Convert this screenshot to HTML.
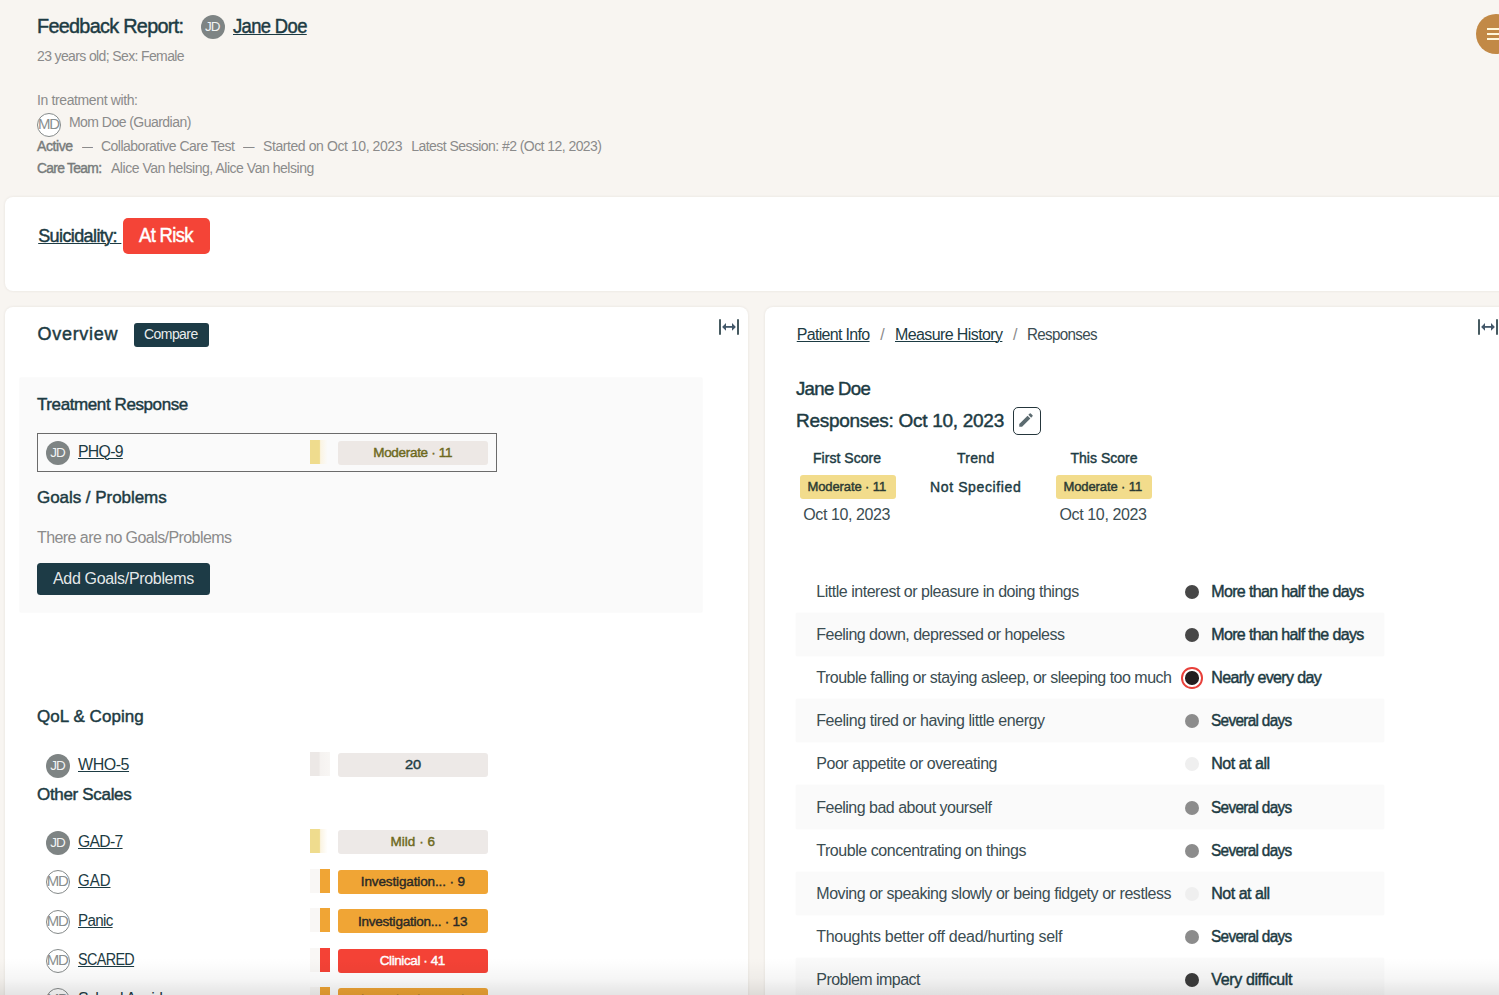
<!DOCTYPE html>
<html lang="en">
<head>
<meta charset="utf-8">
<title>Feedback Report: Jane Doe</title>
<style>
html,body{margin:0;padding:0}
body{width:1499px;height:995px;overflow:hidden;position:relative;background:#f8f5f1;font-family:"Liberation Sans",sans-serif}
h1,h2,h3{margin:0;font-weight:normal}
a{text-decoration:none}
.t{position:absolute;white-space:pre;transform-origin:0 50%;line-height:1;font-family:"Liberation Sans",sans-serif;font-weight:normal;z-index:3}
.t.m{-webkit-text-stroke:0.45px currentColor}
.t.m.s{-webkit-text-stroke:0.42px currentColor}
.t.b{font-weight:bold}
.t.u{text-decoration:underline;text-decoration-thickness:1.1px;text-underline-offset:1.2px}
.panel{position:absolute;background:#fff;border-radius:8px;box-shadow:0 0 3px rgba(40,30,20,.09)}
.menu{position:absolute;left:1476px;top:14px;width:40px;height:40px;border-radius:50%;background:#c28946}
.menu i{position:absolute;left:11px;width:18px;height:2.2px;background:#fff8dc}
.av{position:absolute;width:24px;height:24px;border-radius:50%;box-sizing:border-box;font-size:14px;line-height:24px;text-align:center;letter-spacing:-1px;text-indent:-1px;z-index:3}
.av.f{background:#7e8484;color:rgba(255,255,255,.92);font-size:13.5px}
.av.o{background:#fff;border:1px solid #858a8a;color:#8a8f8f;line-height:19.6px;font-size:15px;letter-spacing:-1.2px;text-indent:-1.2px}
.risk{position:absolute;left:123px;top:217.75px;width:86.5px;height:35.75px;border-radius:5px;background:#f44437}
.btn{position:absolute;background:#1d3b46}
.exp{position:absolute}
.card{position:absolute;background:#fafafa;border-radius:1px;box-shadow:0 0 2px rgba(0,0,0,.07)}
.rowbox{position:absolute;box-sizing:border-box;border:1px solid #6b6b6b;background:transparent}
.bar{position:absolute;width:19.6px;height:24px}
.bar.y1{background:linear-gradient(90deg,#efdc8e 0,#efdc8e 47%,#fbf4e2 53%,rgba(252,247,238,0) 88%)}
.bar.g{background:linear-gradient(90deg,#ece8e6 0,#ece8e6 46%,#f5f2f0 50%,#f8f6f4 100%)}
.bar.o2{background:linear-gradient(90deg,#f9f7f5 0,#f9f7f5 50%,#f0a535 50%,#f0a535 100%)}
.bar.r2{background:linear-gradient(90deg,#f9f7f5 0,#f9f7f5 50%,#f44236 50%,#f44236 100%)}
.badge{position:absolute;width:150.25px;height:23.8px;border-radius:3px}
.edit{position:absolute;left:1013px;top:407px;width:27.5px;height:27.5px;box-sizing:border-box;border:1.5px solid #25363c;border-radius:5px}
.edit svg{position:absolute;left:3.4px;top:3.1px}
.sb{position:absolute;width:95.5px;height:23.6px;border-radius:3px;background:#f2dc8c}
.stripe{position:absolute;left:796.2px;width:587.4px;height:43.3px;background:#fafafa;border-radius:1px;box-shadow:0 0 2px rgba(0,0,0,.035)}
.dot{position:absolute;left:1185px;width:14px;height:14px;border-radius:50%}
.ring{position:absolute;left:1181.3px;width:21.5px;height:21.5px;border-radius:50%;box-sizing:border-box;border:2px solid #e8403a;background:#fff}
.ring b{position:absolute;left:2px;top:2px;width:13.5px;height:13.5px;border-radius:50%;background:#231f20}
.fade{position:absolute;left:0;top:958px;width:1499px;height:37px;background:linear-gradient(180deg,rgba(0,0,0,0) 0,rgba(0,0,0,.035) 55%,rgba(0,0,0,.105) 100%);z-index:9}
</style>
</head>
<body>
<header class="header" aria-label="Patient header">
<div class="menu"><i style="top:14px"></i><i style="top:19px"></i><i style="top:24px"></i></div>
<div class="av f" style="left:200.7px;top:15px">JD</div>
<div class="av o" style="left:37px;top:112.5px">MD</div>
<h1 class="t m" style="left:37.00px;top:16px;font-size:20px;letter-spacing:-0.700px;color:#1d3b43;transform:scaleX(0.9900)">Feedback Report:</h1>
<a class="t m u" style="left:232.60px;top:16px;font-size:20px;letter-spacing:-0.700px;color:#1d3b43;transform:scaleX(0.9216)">Jane Doe</a>
<span class="t r" style="left:37.00px;top:49px;font-size:14px;letter-spacing:-0.627px;color:#8b8b8b">23 years old; Sex: Female</span>
<span class="t r" style="left:37.00px;top:93px;font-size:14px;letter-spacing:-0.376px;color:#8b8b8b">In treatment with:</span>
<span class="t r" style="left:69.00px;top:115px;font-size:14px;letter-spacing:-0.541px;color:#8b8b8b">Mom Doe (Guardian)</span>
<span class="t m s" style="left:37.00px;top:139px;font-size:14px;letter-spacing:-0.425px;color:#777b7b">Active</span>
<span class="t r" style="left:82.00px;top:139px;font-size:14px;letter-spacing:0.000px;color:#8b8b8b;transform:scaleX(0.7857)">—</span>
<span class="t r" style="left:101.00px;top:139px;font-size:14px;letter-spacing:-0.512px;color:#8b8b8b">Collaborative Care Test</span>
<span class="t r" style="left:243.00px;top:139px;font-size:14px;letter-spacing:0.000px;color:#8b8b8b;transform:scaleX(0.8214)">—</span>
<span class="t r" style="left:263.00px;top:139px;font-size:14px;letter-spacing:-0.416px;color:#8b8b8b">Started on Oct 10, 2023</span>
<span class="t r" style="left:411.25px;top:139px;font-size:14px;letter-spacing:-0.557px;color:#8b8b8b">Latest Session: #2 (Oct 12, 2023)</span>
<span class="t m s" style="left:37.00px;top:161px;font-size:14px;letter-spacing:-0.700px;color:#777b7b;transform:scaleX(0.9877)">Care Team:</span>
<span class="t r" style="left:111.00px;top:161px;font-size:14px;letter-spacing:-0.470px;color:#8b8b8b">Alice Van helsing, Alice Van helsing</span>
</header>
<section class="alert" aria-label="Risk alerts">
<div class="panel" style="left:4.6px;top:196.8px;width:1520px;height:94.2px"></div>
<div class="risk"></div>
<a class="t m u" style="left:38.20px;top:227px;font-size:18px;letter-spacing:-0.604px;color:#1d3b43">Suicidality: </a>
<span class="t m" style="left:139.10px;top:225px;font-size:20px;letter-spacing:-0.700px;color:#ffffff;transform:scaleX(0.9215)">At Risk</span>
</section>
<section class="overview" aria-label="Overview">
<div class="panel" style="left:4.6px;top:307px;width:743.9px;height:760px"></div>
<div class="btn" style="left:134px;top:322.75px;width:74.75px;height:23.75px;border-radius:3px"></div>
<svg class="exp" style="left:718.9px;top:319px" width="20" height="16" viewBox="0 0 20 16"><path d="M1 1v14M19 1v14" stroke="#475b61" stroke-width="2" stroke-linecap="round" fill="none"/><path d="M6 7.9h8" stroke="#43586a" stroke-width="1.8" fill="none"/><path d="M3.1 7.9L7 4v7.8zM16.9 7.9L13 4v7.8z" fill="#43586a"/></svg>
<div class="card" style="left:19.8px;top:377.7px;width:682px;height:234px"></div>
<div class="rowbox" style="left:37px;top:433.25px;width:459.75px;height:38.25px"></div>
<div class="btn" style="left:37px;top:563px;width:172.6px;height:31.8px;border-radius:3.5px"></div>
<div class="av f" style="left:45.9px;top:441.00px">JD</div>
<div class="bar y1" style="left:310px;top:440.05px"></div>
<div class="badge" style="left:338px;top:441.25px;background:#ede8e5"></div>
<div class="av f" style="left:45.9px;top:753.60px">JD</div>
<div class="bar g" style="left:310px;top:751.80px"></div>
<div class="badge" style="left:338px;top:753.00px;background:#ede9e7"></div>
<div class="av f" style="left:45.9px;top:830.60px">JD</div>
<div class="bar y1" style="left:310px;top:828.80px"></div>
<div class="badge" style="left:338px;top:830.00px;background:#ede9e7"></div>
<div class="av o" style="left:45.9px;top:870.00px">MD</div>
<div class="bar o2" style="left:310px;top:868.80px"></div>
<div class="badge" style="left:338px;top:870.00px;background:#f0a535"></div>
<div class="av o" style="left:45.9px;top:910.00px">MD</div>
<div class="bar o2" style="left:310px;top:908.10px"></div>
<div class="badge" style="left:338px;top:909.30px;background:#f0a535"></div>
<div class="av o" style="left:45.9px;top:948.60px">MD</div>
<div class="bar r2" style="left:310px;top:947.80px"></div>
<div class="badge" style="left:338px;top:949.00px;background:#f44236"></div>
<div class="av o" style="left:45.9px;top:988.00px">MD</div>
<div class="bar o2" style="left:310px;top:986.80px"></div>
<div class="badge" style="left:338px;top:988.00px;background:#f0a535"></div>
<h2 class="t m" style="left:37.50px;top:325px;font-size:18px;letter-spacing:0.712px;color:#1d3b43">Overview</h2>
<span class="t r" style="left:144.00px;top:327px;font-size:14px;letter-spacing:-0.557px;color:rgba(255,255,255,.92)">Compare</span>
<h3 class="t m" style="left:37.00px;top:396px;font-size:17px;letter-spacing:-0.404px;color:#1d3b43">Treatment Response</h3>
<a class="t r u" style="left:78.00px;top:444px;font-size:16px;letter-spacing:-0.700px;color:#1d3b43;transform:scaleX(0.9869)">PHQ-9</a>
<span class="t m s" style="left:373.25px;top:446px;font-size:13.5px;letter-spacing:-0.316px;color:#6d691d">Moderate · 11</span>
<h3 class="t m" style="left:37.00px;top:489px;font-size:17px;letter-spacing:-0.043px;color:#1d3b43">Goals / Problems</h3>
<span class="t r" style="left:37.00px;top:530px;font-size:16px;letter-spacing:-0.572px;color:#8b8b8b">There are no Goals/Problems</span>
<span class="t r" style="left:53.00px;top:571px;font-size:16px;letter-spacing:-0.326px;color:rgba(255,255,255,.9)">Add Goals/Problems</span>
<h3 class="t m" style="left:37.00px;top:708px;font-size:17px;letter-spacing:0.053px;color:#1d3b43">QoL &amp; Coping</h3>
<a class="t r u" style="left:78.00px;top:757px;font-size:16px;letter-spacing:-0.457px;color:#1d3b43">WHO-5</a>
<span class="t m s" style="left:405.00px;top:758px;font-size:13.5px;letter-spacing:0.000px;color:#1d3b43;transform:scaleX(1.0811)">20</span>
<h3 class="t m" style="left:37.00px;top:786px;font-size:17px;letter-spacing:-0.320px;color:#1d3b43">Other Scales</h3>
<a class="t r u" style="left:78.00px;top:834px;font-size:16px;letter-spacing:-0.700px;color:#1d3b43;transform:scaleX(0.9814)">GAD-7</a>
<span class="t m s" style="left:390.50px;top:835px;font-size:13.5px;letter-spacing:0.033px;color:#6d691d">Mild · 6</span>
<a class="t r u" style="left:78.00px;top:873px;font-size:16px;letter-spacing:0.000px;color:#1d3b43;transform:scaleX(0.9374)">GAD</a>
<span class="t m s" style="left:360.75px;top:875px;font-size:13.5px;letter-spacing:-0.122px;color:#2b2a26">Investigation... · 9</span>
<a class="t r u" style="left:78.00px;top:913px;font-size:16px;letter-spacing:-0.700px;color:#1d3b43;transform:scaleX(0.9468)">Panic</a>
<span class="t m s" style="left:358.00px;top:915px;font-size:13.5px;letter-spacing:-0.234px;color:#2b2a26">Investigation... · 13</span>
<a class="t r u" style="left:78.00px;top:952px;font-size:16px;letter-spacing:-0.700px;color:#1d3b43;transform:scaleX(0.8981)">SCARED</a>
<span class="t m s" style="left:379.70px;top:954px;font-size:13.5px;letter-spacing:-0.403px;color:#ffffff">Clinical · 41</span>
<a class="t r u" style="left:78.00px;top:991px;font-size:16px;letter-spacing:-0.661px;color:#1d3b43">School Avoidance</a>
<span class="t m s" style="left:360.75px;top:993px;font-size:13.5px;letter-spacing:-0.122px;color:#2b2a26">Investigation... · 4</span>
</section>
<section class="responses" aria-label="Responses">
<div class="panel" style="left:765px;top:307px;width:760px;height:760px"></div>
<svg class="exp" style="left:1478.0px;top:319px" width="20" height="16" viewBox="0 0 20 16"><path d="M1 1v14M19 1v14" stroke="#475b61" stroke-width="2" stroke-linecap="round" fill="none"/><path d="M6 7.9h8" stroke="#43586a" stroke-width="1.8" fill="none"/><path d="M3.1 7.9L7 4v7.8zM16.9 7.9L13 4v7.8z" fill="#43586a"/></svg>
<div class="edit"><svg width="18" height="18" viewBox="0 0 24 24"><path fill="#5c6b70" d="M3 17.25V21h3.75L17.81 9.94l-3.75-3.75L3 17.25zM20.71 7.04a1 1 0 000-1.41l-2.34-2.34a1 1 0 00-1.41 0l-1.83 1.83 3.75 3.75 1.83-1.83z"/></svg></div>
<div class="sb" style="left:800px;top:475px"></div>
<div class="sb" style="left:1056px;top:475px"></div>
<div class="dot" style="top:584.50px;background:#474747"></div>
<div class="stripe" style="top:612.60px"></div>
<div class="dot" style="top:627.70px;background:#474747"></div>
<div class="ring" style="top:667.25px"><b></b></div>
<div class="stripe" style="top:699.00px"></div>
<div class="dot" style="top:714.10px;background:#8c8c8c"></div>
<div class="dot" style="top:757.30px;background:#efefef"></div>
<div class="stripe" style="top:785.40px"></div>
<div class="dot" style="top:800.50px;background:#8c8c8c"></div>
<div class="dot" style="top:843.70px;background:#8c8c8c"></div>
<div class="stripe" style="top:871.80px"></div>
<div class="dot" style="top:886.90px;background:#efefef"></div>
<div class="dot" style="top:930.10px;background:#8c8c8c"></div>
<div class="stripe" style="top:958.20px"></div>
<div class="dot" style="top:973.30px;background:#3c3c3c"></div>
<a class="t r u" style="left:796.75px;top:327px;font-size:16px;letter-spacing:-0.678px;color:#1d3b43">Patient Info</a>
<span class="t r" style="left:880.30px;top:327px;font-size:16px;letter-spacing:0.000px;color:#8b8b8b">/</span>
<a class="t r u" style="left:895.00px;top:327px;font-size:16px;letter-spacing:-0.606px;color:#1d3b43">Measure History</a>
<span class="t r" style="left:1013.00px;top:327px;font-size:16px;letter-spacing:0.000px;color:#8b8b8b">/</span>
<span class="t r" style="left:1027.00px;top:327px;font-size:16px;letter-spacing:-0.700px;color:#3b4d52;transform:scaleX(0.9470)">Responses</span>
<h2 class="t m" style="left:795.75px;top:379px;font-size:19px;letter-spacing:-0.700px;color:#1d3b43;transform:scaleX(0.9778)">Jane Doe</h2>
<h2 class="t m" style="left:796.00px;top:411px;font-size:19px;letter-spacing:-0.281px;color:#1d3b43">Responses: Oct 10, 2023</h2>
<span class="t m s" style="left:813.00px;top:451px;font-size:14px;letter-spacing:0.031px;color:#1d3b43">First Score</span>
<span class="t m s" style="left:957.00px;top:451px;font-size:14px;letter-spacing:0.297px;color:#1d3b43">Trend</span>
<span class="t m s" style="left:1070.50px;top:451px;font-size:14px;letter-spacing:0.009px;color:#1d3b43">This Score</span>
<span class="t m s" style="left:807.50px;top:480px;font-size:13px;letter-spacing:-0.102px;color:#2b3a33">Moderate · 11</span>
<span class="t m s" style="left:930.00px;top:480px;font-size:14px;letter-spacing:0.622px;color:#1d3b43">Not Specified</span>
<span class="t m s" style="left:1063.50px;top:480px;font-size:13px;letter-spacing:-0.102px;color:#2b3a33">Moderate · 11</span>
<span class="t r" style="left:803.25px;top:507px;font-size:16px;letter-spacing:-0.398px;color:#3b4d52">Oct 10, 2023</span>
<span class="t r" style="left:1059.50px;top:507px;font-size:16px;letter-spacing:-0.375px;color:#3b4d52">Oct 10, 2023</span>
<span class="t r" style="left:816.25px;top:584px;font-size:16px;letter-spacing:-0.472px;color:#3b4d52">Little interest or pleasure in doing things</span>
<span class="t m" style="left:1211.25px;top:584px;font-size:16px;letter-spacing:-0.646px;color:#1d3b43">More than half the days</span>
<span class="t r" style="left:816.25px;top:627px;font-size:16px;letter-spacing:-0.506px;color:#3b4d52">Feeling down, depressed or hopeless</span>
<span class="t m" style="left:1211.25px;top:627px;font-size:16px;letter-spacing:-0.646px;color:#1d3b43">More than half the days</span>
<span class="t r" style="left:816.25px;top:670px;font-size:16px;letter-spacing:-0.500px;color:#3b4d52">Trouble falling or staying asleep, or sleeping too much</span>
<span class="t m" style="left:1211.25px;top:670px;font-size:16px;letter-spacing:-0.636px;color:#1d3b43">Nearly every day</span>
<span class="t r" style="left:816.25px;top:713px;font-size:16px;letter-spacing:-0.440px;color:#3b4d52">Feeling tired or having little energy</span>
<span class="t m" style="left:1211.25px;top:713px;font-size:16px;letter-spacing:-0.700px;color:#1d3b43;transform:scaleX(0.9581)">Several days</span>
<span class="t r" style="left:816.25px;top:756px;font-size:16px;letter-spacing:-0.453px;color:#3b4d52">Poor appetite or overeating</span>
<span class="t m" style="left:1211.25px;top:756px;font-size:16px;letter-spacing:-0.488px;color:#1d3b43">Not at all</span>
<span class="t r" style="left:816.25px;top:800px;font-size:16px;letter-spacing:-0.513px;color:#3b4d52">Feeling bad about yourself</span>
<span class="t m" style="left:1211.25px;top:800px;font-size:16px;letter-spacing:-0.700px;color:#1d3b43;transform:scaleX(0.9581)">Several days</span>
<span class="t r" style="left:816.25px;top:843px;font-size:16px;letter-spacing:-0.443px;color:#3b4d52">Trouble concentrating on things</span>
<span class="t m" style="left:1211.25px;top:843px;font-size:16px;letter-spacing:-0.700px;color:#1d3b43;transform:scaleX(0.9581)">Several days</span>
<span class="t r" style="left:816.25px;top:886px;font-size:16px;letter-spacing:-0.445px;color:#3b4d52">Moving or speaking slowly or being fidgety or restless</span>
<span class="t m" style="left:1211.25px;top:886px;font-size:16px;letter-spacing:-0.488px;color:#1d3b43">Not at all</span>
<span class="t r" style="left:816.25px;top:929px;font-size:16px;letter-spacing:-0.292px;color:#3b4d52">Thoughts better off dead/hurting self</span>
<span class="t m" style="left:1211.25px;top:929px;font-size:16px;letter-spacing:-0.700px;color:#1d3b43;transform:scaleX(0.9581)">Several days</span>
<span class="t r" style="left:816.25px;top:972px;font-size:16px;letter-spacing:-0.531px;color:#3b4d52">Problem impact</span>
<span class="t m" style="left:1211.25px;top:972px;font-size:16px;letter-spacing:-0.363px;color:#1d3b43">Very difficult</span>
</section>
<div class="fade"></div>
</body>
</html>
